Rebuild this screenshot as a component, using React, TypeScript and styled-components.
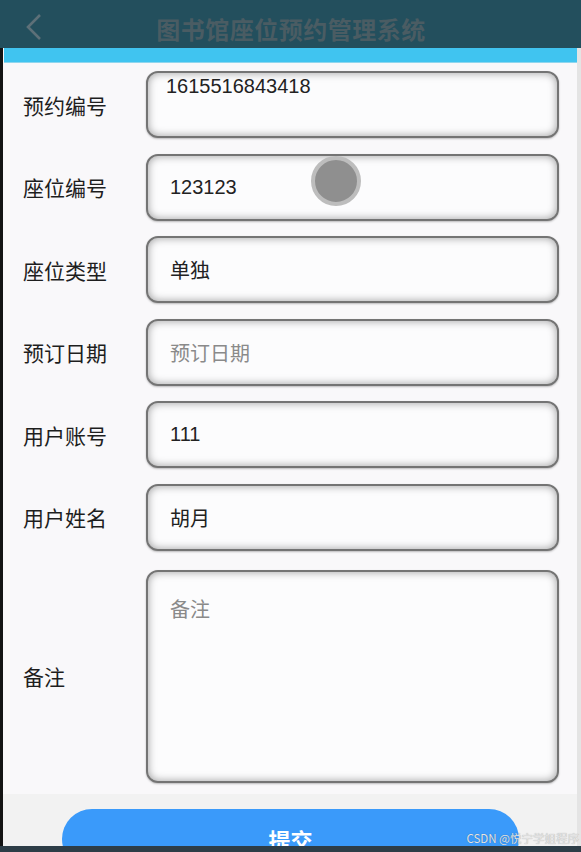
import React from "react";
import styled, {createGlobalStyle} from "styled-components";

const GlobalStyle = createGlobalStyle`
    html, body {
        margin: 0;
        padding: 0;
        background: #f9f8fa;
    }
    * {
        box-sizing: border-box;
    }
`;

type Field = {
    label: string,
    value?: string,
    placeholder?: string,
    top?: boolean,
};

const fields: Field[] = [
    {label: '预约编号', value: '1615516843418', top: true},
    {label: '座位编号', value: '123123'},
    {label: '座位类型', value: '单独'},
    {label: '预订日期', placeholder: '预订日期'},
    {label: '用户账号', value: '111'},
    {label: '用户姓名', value: '胡月'},
];

const App: React.FC = () => {
    return (
        <Screen>
            <GlobalStyle/>
            <Header>
                <BackIcon width="18" height="28" viewBox="0 0 18 28">
                    <path d="M15 2 L3 14 L15 26" fill="none" stroke="#5d7078" strokeWidth="2.6"/>
                </BackIcon>
                <Title>图书馆座位预约管理系统</Title>
            </Header>
            <Body>
                <AccentBar/>
                <Form>
                    {fields.map((f) => (
                        <Row key={f.label}>
                            <Label>{f.label}</Label>
                            <InputBox $top={!!f.top} $empty={!f.value}>
                                {f.value || f.placeholder}
                            </InputBox>
                        </Row>
                    ))}
                    <Row $tall>
                        <Label>备注</Label>
                        <TextBox>备注</TextBox>
                    </Row>
                </Form>
                <Footer>
                    <SubmitButton>提交</SubmitButton>
                </Footer>
            </Body>
            <BottomBar/>
            <Cursor/>
            <Watermark>CSDN @悦宁学姐程序</Watermark>
        </Screen>
    );
};

export default App;


const Screen = styled.div`
    position: relative;
    width: 581px;
    height: 852px;
    overflow: hidden;
    display: flex;
    flex-direction: column;
    font-family: "Liberation Sans", "Noto Sans CJK SC", sans-serif;
    background: #f9f8fa;
`;

const Header = styled.div`
    position: relative;
    height: 48px;
    flex: none;
    background: #234f5d;
    display: flex;
    align-items: center;
    justify-content: center;
    
    & svg {
        position: absolute;
        left: 25px;
        top: 13px;
    }
`;

const BackIcon = styled.svg`
    display: block;
`;

const Title = styled.div`
    margin-left: 1px;
    margin-top: 8px;
    font-family: "Noto Sans CJK SC", sans-serif;
    font-size: 24px;
    font-weight: 700;
    letter-spacing: 0.5px;
    color: #4a5c63;
`;

const Body = styled.div`
    flex: 1;
    display: flex;
    flex-direction: column;
    border-left: 3px solid #141414;
    border-right: 4px solid #e4e4e4;
    min-height: 0;
`;

const AccentBar = styled.div`
    height: 15px;
    flex: none;
    margin-left: 1px;
    background: #40c4f0;
    border-bottom: 1px solid #8fd6ee;
`;

const Form = styled.div`
    display: flex;
    flex-direction: column;
    gap: 15.6px;
    padding: 8px 18px 11px 20px;
    background: #f9f8fa;
`;

const Row = styled.div<{$tall?: boolean}>`
    display: flex;
    align-items: center;
    height: ${p => p.$tall ? '213px' : '67px'};
    margin-top: ${p => p.$tall ? '3px' : '0'};
`;

const Label = styled.div`
    width: 123px;
    flex: none;
    font-family: "Noto Sans CJK SC", sans-serif;
    font-size: 21px;
    color: #1e1e1e;
`;

const boxBase = `
    flex: 1;
    height: 100%;
    border: 2px solid #747474;
    border-radius: 12px;
    background: #fcfcfd;
    box-shadow: inset 0 0 8px rgba(0, 0, 0, 0.38), 0 1px 2px rgba(0, 0, 0, 0.25);
    font-family: "Liberation Sans", "Noto Sans CJK SC", sans-serif;
    font-size: 20px;
`;

const InputBox = styled.div<{$top: boolean, $empty: boolean}>`
    ${boxBase}
    display: flex;
    align-items: ${p => p.$top ? 'flex-start' : 'center'};
    padding: ${p => p.$top ? '2px 18px 0 18px' : '0 22px'};
    color: ${p => p.$empty ? '#8a8a8a' : '#222'};
`;

const TextBox = styled.div`
    ${boxBase}
    padding: 22px 22px;
    color: #8a8a8a;
`;

const Footer = styled.div`
    flex: 1;
    background: #f2f2f2;
    padding: 15px 0 0 59px;
    overflow: hidden;
`;

const SubmitButton = styled.div`
    width: 457px;
    height: 60px;
    border-radius: 30px;
    background: #3a9afa;
    display: flex;
    justify-content: center;
    padding-top: 14px;
    font-family: "Noto Sans CJK SC", sans-serif;
    font-size: 22px;
    font-weight: 700;
    color: #fff;
`;

const BottomBar = styled.div`
    height: 6px;
    flex: none;
    background: #2d3d47;
`;

const Cursor = styled.div`
    position: absolute;
    left: 311px;
    top: 156px;
    width: 50px;
    height: 50px;
    border-radius: 50%;
    background: #8f8f8f;
    border: 4px solid #bdbdbd;
`;

const Watermark = styled.div`
    position: absolute;
    right: 2px;
    bottom: 6px;
    font-family: "Noto Sans CJK SC", sans-serif;
    font-size: 11.5px;
    color: #e4e4e4;
    text-shadow: 0 0 1px rgba(0, 0, 0, 0.35);
`;
